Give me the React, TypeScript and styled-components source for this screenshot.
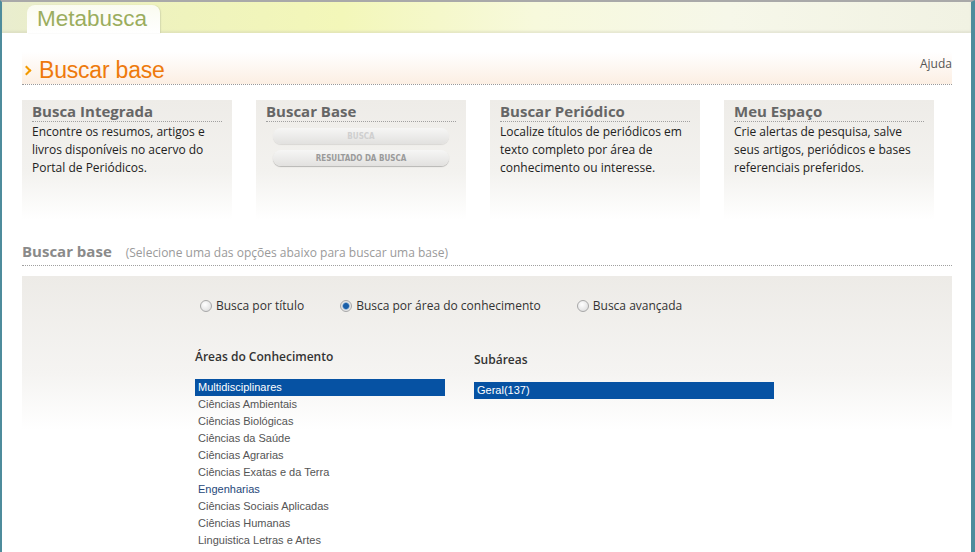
import React from 'react';
import styled, { createGlobalStyle } from 'styled-components';

const Global = createGlobalStyle`
  html, body { margin: 0; padding: 0; background: #fff; }
  body { font-family: "Open Sans", "DejaVu Sans", sans-serif; }
`;

const Frame = styled.div`
  min-height: 550px;
  border-top: 2px solid #a9a9a9;
  border-left: 2px solid #4e8c9c;
  border-right: 4px solid #4e8c9c;
  overflow: hidden;
`;

const Header = styled.div`
  height: 31px;
  display: flex;
  align-items: flex-end;
  background: linear-gradient(90deg, #e9edcf 0%, #eef2be 15%, #f3f7b9 35%, #f7f9dc 55%, #f6f7e9 75%, #f1f2e3 100%);
  box-shadow: inset 0 -2px 2px rgba(200, 200, 180, 0.35);
  padding-left: 25px;
`;

const Tab = styled.div`
  width: 123px;
  height: 28px;
  padding-left: 10px;
  border-radius: 8px 8px 0 0;
  background: linear-gradient(#fafbf0, #ffffff);
  box-shadow: 1px 0 1px rgba(190, 195, 160, 0.5);
  font-family: "Liberation Sans", Arial, sans-serif;
  font-size: 22.5px;
  line-height: 28px;
  color: #9bad5d;
`;

const Content = styled.div`
  padding: 19px 19px 0 20px;
`;

const TitleBar = styled.div`
  height: 32px;
  display: flex;
  align-items: center;
  justify-content: space-between;
  background: linear-gradient(#ffffff, #fcefe3);
  border-bottom: 1px dotted #9a9a9a;
`;

const PageTitle = styled.h1`
  margin: 0;
  display: flex;
  align-items: center;
  gap: 9px;
  font-family: "Liberation Sans", Arial, sans-serif;
  font-weight: normal;
  font-size: 23px;
  color: #ee7a0c;
  letter-spacing: -0.2px;
  padding-top: 4px;
`;

const Chevron = styled.span`
  width: 5px;
  height: 5px;
  border-right: 2px solid #f39a00;
  border-bottom: 2px solid #f39a00;
  transform: rotate(-45deg);
  margin-left: 1px;
`;

const HelpLink = styled.a`
  font-size: 12px;
  color: #555;
  text-decoration: none;
  align-self: flex-start;
  padding-top: 3px;
`;

const Cards = styled.div`
  display: grid;
  grid-template-columns: repeat(4, 210px);
  gap: 24px;
  margin-top: 15px;
`;

const Card = styled.div`
  height: 120px;
  padding: 2px 10px 0;
  box-sizing: border-box;
  background: linear-gradient(#eeece8 0%, #f3f2ef 60%, #ffffff 100%);
`;

const CardTitle = styled.h2`
  margin: 0;
  font-size: 15px;
  font-weight: bold;
  color: #666;
  line-height: 18px;
  padding-bottom: 1px;
  border-bottom: 1px dotted #a0a0a0;
`;

const CardText = styled.p`
  margin: 0;
  padding-top: 1px;
  font-size: 12px;
  line-height: 18px;
  color: #222;
`;

const PillButton = styled.button<{ $disabled?: boolean }>`
  display: block;
  width: 176px;
  height: 16px;
  margin: 6px 0 0 7px;
  border: none;
  border-radius: 8px;
  background: linear-gradient(#f6f6f5, #e2e1df);
  box-shadow: 0 1px 1px rgba(0, 0, 0, ${p => (p.$disabled ? 0.1 : 0.25)});
  font-family: "DejaVu Sans Condensed", "DejaVu Sans", sans-serif;
  font-weight: bold;
  font-size: 8px;
  color: ${p => (p.$disabled ? '#cfcfcf' : '#9a9a9a')};
  padding: 0;
`;

const SectionHead = styled.div`
  margin-top: 21px;
  display: flex;
  align-items: baseline;
  gap: 14px;
  padding-bottom: 4px;
  border-bottom: 1px dotted #a0a0a0;
`;

const SectionTitle = styled.h3`
  margin: 0;
  font-size: 15px;
  font-weight: bold;
  color: #8a8a8a;
`;

const SectionHint = styled.span`
  font-size: 12px;
  color: #9a9a9a;
`;

const Panel = styled.div`
  margin-top: 10px;
  height: 280px;
  background: linear-gradient(#edebe7 0%, #f5f4f2 35%, #ffffff 55%);
`;

const Radios = styled.div`
  display: flex;
  gap: 36px;
  padding: 21px 0 0 178px;
`;

const RadioLabel = styled.label`
  display: flex;
  align-items: center;
  gap: 4px;
  font-size: 12px;
  color: #333;
`;

const RadioDot = styled.span<{ $checked?: boolean }>`
  width: 10px;
  height: 10px;
  border-radius: 50%;
  border: 1px solid #a8a8a8;
  background: ${p =>
    p.$checked
      ? 'radial-gradient(circle, #1a5fa8 0 2.5px, #5b8fc4 3px, #e6e6e6 4px)'
      : 'radial-gradient(circle at 40% 35%, #ffffff, #d8d8d8)'};
`;

const Lists = styled.div`
  display: flex;
  padding: 34px 0 0 173px;
  gap: 29px;
`;

const ListCol = styled.div<{ $width: number; $top: number }>`
  width: ${p => p.$width}px;
  padding-top: ${p => p.$top}px;
`;

const ListTitle = styled.div`
  font-size: 12px;
  font-weight: 600;
  color: #333;
  height: 19px;
  margin-bottom: 12px;
`;

const ListItem = styled.div<{ $selected?: boolean; $link?: boolean }>`
  height: 17px;
  line-height: 17px;
  padding-left: 3px;
  font-family: "Liberation Sans", Arial, sans-serif;
  font-size: 11px;
  background: ${p => (p.$selected ? '#0652a3' : 'transparent')};
  color: ${p => (p.$selected ? '#fff' : p.$link ? '#27487a' : '#555')};
`;

const areas = [
  'Multidisciplinares',
  'Ciências Ambientais',
  'Ciências Biológicas',
  'Ciências da Saúde',
  'Ciências Agrarias',
  'Ciências Exatas e da Terra',
  'Engenharias',
  'Ciências Sociais Aplicadas',
  'Ciências Humanas',
  'Linguistica Letras e Artes',
];

export default function App() {
  return (
    <>
      <Global />
      <Frame>
        <Header>
          <Tab>Metabusca</Tab>
        </Header>
        <Content>
          <TitleBar>
            <PageTitle>
              <Chevron />
              Buscar base
            </PageTitle>
            <HelpLink href="#">Ajuda</HelpLink>
          </TitleBar>

          <Cards>
            <Card>
              <CardTitle>Busca Integrada</CardTitle>
              <CardText>Encontre os resumos, artigos e livros disponíveis no acervo do Portal de Periódicos.</CardText>
            </Card>
            <Card>
              <CardTitle>Buscar Base</CardTitle>
              <PillButton $disabled>BUSCA</PillButton>
              <PillButton>RESULTADO DA BUSCA</PillButton>
            </Card>
            <Card>
              <CardTitle>Buscar Periódico</CardTitle>
              <CardText>Localize títulos de periódicos em texto completo por área de conhecimento ou interesse.</CardText>
            </Card>
            <Card>
              <CardTitle>Meu Espaço</CardTitle>
              <CardText>Crie alertas de pesquisa, salve seus artigos, periódicos e bases referenciais preferidos.</CardText>
            </Card>
          </Cards>

          <SectionHead>
            <SectionTitle>Buscar base</SectionTitle>
            <SectionHint>(Selecione uma das opções abaixo para buscar uma base)</SectionHint>
          </SectionHead>

          <Panel>
            <Radios>
              <RadioLabel><RadioDot />Busca por título</RadioLabel>
              <RadioLabel><RadioDot $checked />Busca por área do conhecimento</RadioLabel>
              <RadioLabel><RadioDot />Busca avançada</RadioLabel>
            </Radios>
            <Lists>
              <ListCol $width={250} $top={0}>
                <ListTitle>Áreas do Conhecimento</ListTitle>
                {areas.map((a, i) => (
                  <ListItem key={a} $selected={i === 0} $link={a === 'Engenharias'}>{a}</ListItem>
                ))}
              </ListCol>
              <ListCol $width={300} $top={3}>
                <ListTitle>Subáreas</ListTitle>
                <ListItem $selected>Geral(137)</ListItem>
              </ListCol>
            </Lists>
          </Panel>
        </Content>
      </Frame>
    </>
  );
}
